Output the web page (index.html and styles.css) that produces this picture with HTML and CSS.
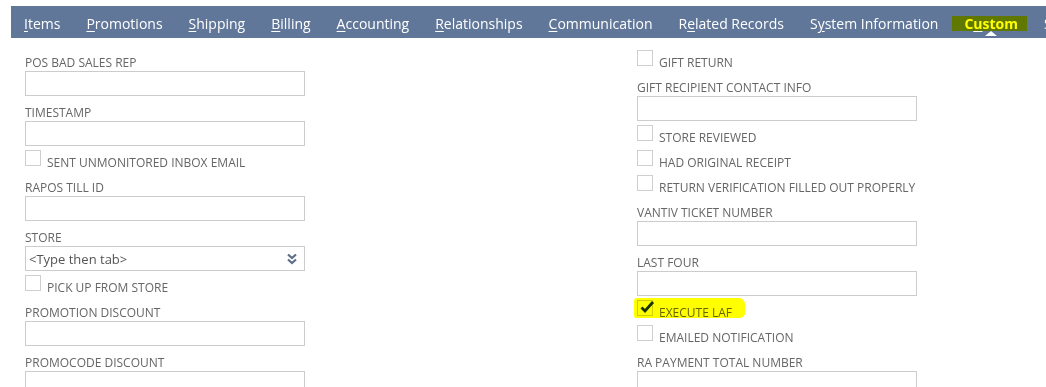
FILE: index.html
```html
<!DOCTYPE html>
<html>
<head>
<meta charset="utf-8">
<link rel="stylesheet" href="styles.css">
</head>
<body>
<div class="page">
  <nav class="tabs">
    <a class="tab"><u>I</u>tems</a>
    <a class="tab"><u>P</u>romotions</a>
    <a class="tab"><u>S</u>hipping</a>
    <a class="tab"><u>B</u>illing</a>
    <a class="tab"><u>A</u>ccounting</a>
    <a class="tab"><u>R</u>elationships</a>
    <a class="tab"><u>C</u>ommunication</a>
    <a class="tab">R<u>e</u>lated Records</a>
    <a class="tab">S<u>y</u>stem Information</a>
    <a class="tab active"><span class="mark">C<u>u</u>stom</span></a>
    <a class="tab">Sales</a>
  </nav>
  <div class="form">
    <div class="col">
      <div class="lbl">POS BAD SALES REP</div>
      <div class="input"></div>
      <div class="lbl">TIMESTAMP</div>
      <div class="input"></div>
      <div class="check"><span class="box"></span><span class="ctext">SENT UNMONITORED INBOX EMAIL</span></div>
      <div class="lbl">RAPOS TILL ID</div>
      <div class="input"></div>
      <div class="lbl">STORE</div>
      <div class="input select"><span class="ph">&lt;Type then tab&gt;</span>
        <svg class="chev" width="12" height="12" viewBox="0 0 12 12"><path d="M2 1.5 L6 5 L10 1.5 M2 6.5 L6 10 L10 6.5" fill="none" stroke="#5f6f88" stroke-width="2.2"/></svg>
      </div>
      <div class="check"><span class="box"></span><span class="ctext">PICK UP FROM STORE</span></div>
      <div class="lbl">PROMOTION DISCOUNT</div>
      <div class="input"></div>
      <div class="lbl">PROMOCODE DISCOUNT</div>
      <div class="input"></div>
    </div>
    <div class="col">
      <div class="check"><span class="box"></span><span class="ctext">GIFT RETURN</span></div>
      <div class="lbl">GIFT RECIPIENT CONTACT INFO</div>
      <div class="input"></div>
      <div class="check"><span class="box"></span><span class="ctext">STORE REVIEWED</span></div>
      <div class="check"><span class="box"></span><span class="ctext">HAD ORIGINAL RECEIPT</span></div>
      <div class="check"><span class="box"></span><span class="ctext">RETURN VERIFICATION FILLED OUT PROPERLY</span></div>
      <div class="lbl">VANTIV TICKET NUMBER</div>
      <div class="input"></div>
      <div class="lbl">LAST FOUR</div>
      <div class="input"></div>
      <div class="check highlighted"><span class="box checked">
        <svg class="tick" width="16" height="14" viewBox="0 0 16 14"><path d="M2.5 7.5 L6 11 L14 2" fill="none" stroke="#1b3358" stroke-width="2.8"/></svg>
      </span><span class="ctext">EXECUTE LAF</span></div>
      <div class="check"><span class="box"></span><span class="ctext">EMAILED NOTIFICATION</span></div>
      <div class="lbl">RA PAYMENT TOTAL NUMBER</div>
      <div class="input"></div>
    </div>
  </div>
</div>
</body>
</html>
```

FILE: styles.css
```css
html, body {
  margin: 0;
  padding: 0;
  background: #fff;
  overflow: hidden;
  height: 387px;
}
body {
  font-family: "Open Sans", "DejaVu Sans", sans-serif;
}
.page {
  padding: 6px 0 0 11px;
}
.tabs {
  display: flex;
  gap: 26px;
  height: 32px;
  background: #607799;
  padding-left: 13px;
  white-space: nowrap;
  overflow: hidden;
  width: 1100px;
}
.tab {
  color: #fff;
  font-size: 14px;
  line-height: 32px;
  padding-top: 2px;
  position: relative;
  flex: none;
}
.tab u {
  text-decoration-thickness: 1px;
  text-underline-offset: 2px;
}
.tab.active {
  font-weight: 700;
}
.tab.active::after {
  content: "";
  position: absolute;
  left: 50%;
  bottom: 2px;
  margin-left: -6px;
  border-left: 6px solid transparent;
  border-right: 6px solid transparent;
  border-bottom: 5px solid #fff;
}
.mark {
  position: relative;
}
.mark::after {
  content: "";
  position: absolute;
  left: -12px;
  right: -9px;
  top: 2px;
  bottom: 2px;
  background: #ffff00;
  mix-blend-mode: multiply;
}
.form {
  display: grid;
  grid-template-columns: 612px 280px;
  padding: 8px 0 0 14px;
}
.col {
  display: flex;
  flex-direction: column;
}
.lbl {
  height: 25px;
  box-sizing: border-box;
  padding-top: 9px;
  font-size: 12px;
  line-height: 16px;
  color: #666;
  white-space: nowrap;
}
.input {
  width: 280px;
  height: 25px;
  box-sizing: border-box;
  border: 1px solid #cccccc;
  background: #fff;
}
.select {
  display: flex;
  align-items: center;
  justify-content: space-between;
  padding: 0 6px 0 3px;
}
.ph {
  font-size: 13px;
  color: #555;
}
.check {
  height: 25px;
  display: flex;
  align-items: flex-start;
  gap: 6px;
  position: relative;
}
.box {
  width: 16px;
  height: 16px;
  box-sizing: border-box;
  border: 1px solid #cfcfcf;
  margin-top: 4px;
  background: #fff;
  flex: none;
  position: relative;
}
.ctext {
  font-size: 12px;
  line-height: 16px;
  padding-top: 9px;
  color: #666;
  white-space: nowrap;
}
.tick {
  position: absolute;
  left: 1px;
  top: -1px;
}
.highlighted::after {
  content: "";
  position: absolute;
  left: -3px;
  top: 2px;
  width: 111px;
  height: 20px;
  background: #ffff00;
  border-radius: 3px 6px 5px 2px;
  mix-blend-mode: multiply;
}
```
